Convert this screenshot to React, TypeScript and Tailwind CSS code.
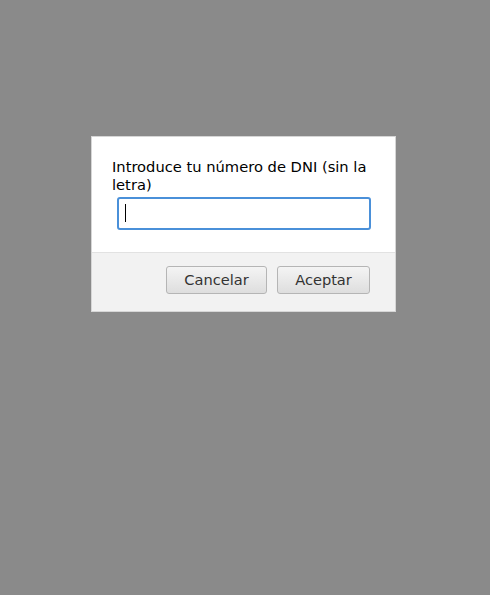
export default function App() {
  return (
    <div className="flex min-h-[595px] justify-center bg-[#8a8a8a] pt-[136px] pr-[3px] font-['DejaVu_Sans',sans-serif]">
      <div className="h-fit w-[305px] border border-[#d6d6d6] bg-white">
        <div className="px-[20px] pt-[21px] pb-[22px]">
          <label className="block text-[14.7px] leading-[18px] text-black">
            Introduce tu número de DNI (sin la letra)
          </label>
          <div className="relative mx-[5px] mt-[3px] w-[254px]">
            <input
              type="text"
              className="block h-[33px] w-full rounded-[3px] border-2 border-[#4a90d9] bg-white px-[6px] text-[14px] text-black outline-none"
            />
            {/* caret */}
            <span className="pointer-events-none absolute top-[7px] left-[8px] h-[18px] w-px bg-black" />
          </div>
        </div>
        <div className="flex justify-end gap-[10px] border-t border-[#e2e2e2] bg-[#f2f2f2] pt-[13px] pr-[25px] pb-[17px]">
          <button className="h-[28px] w-[101px] rounded-[3px] border border-[#b5b5b5] bg-gradient-to-b from-[#f4f4f4] to-[#dedede] text-[14.6px] text-[#333]">
            Cancelar
          </button>
          <button className="h-[28px] w-[93px] rounded-[3px] border border-[#b5b5b5] bg-gradient-to-b from-[#f4f4f4] to-[#dedede] text-[14.6px] text-[#333]">
            Aceptar
          </button>
        </div>
      </div>
    </div>
  );
}
